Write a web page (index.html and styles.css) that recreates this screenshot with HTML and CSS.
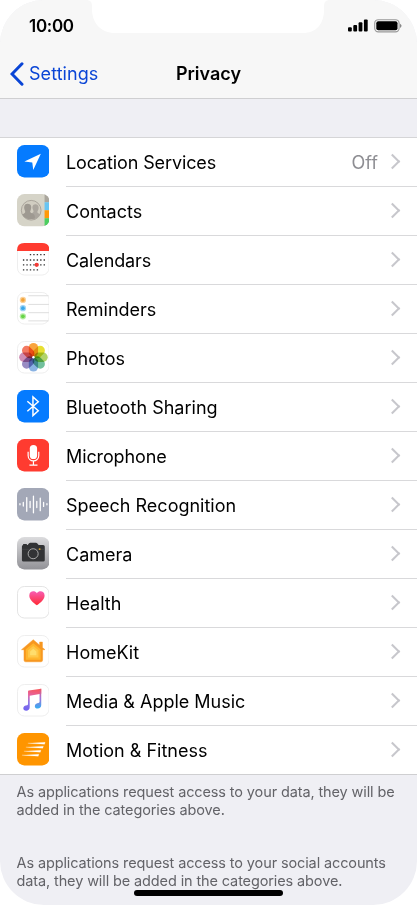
FILE: index.html
```html
<!DOCTYPE html>
<html lang="en">
<head>
    <meta charset="UTF-8">
    <meta name="viewport" content="width=device-width, initial-scale=1.0">
    <title>Privacy</title>
    <link rel="stylesheet" href="styles.css">
</head>
<body>
    <div class="phone">
        <header class="header">
            <svg class="notch" viewBox="0 0 246 34"><path d="M0 0C4 0 6 2 6 6V9C6 23 15 33 29 33H217C231 33 238 23 238 10V6C238 2 240 0 244 0Z" fill="#fff"/></svg>
            <div class="status">
                <span class="time">10:00</span>
                <svg class="signal" width="20" height="14" viewBox="0 0 20 14"><rect x="0" y="8.2" width="3.8" height="4.3" rx="1"/><rect x="5.3" y="6" width="3.8" height="6.5" rx="1"/><rect x="10.6" y="3.3" width="3.8" height="9.2" rx="1"/><rect x="15.9" y=".5" width="3.8" height="12" rx="1"/></svg>
                <svg class="battery" width="28" height="14" viewBox="0 0 28 14"><rect x=".7" y=".7" width="24.4" height="12.2" rx="3.6" fill="none" stroke="#999" stroke-width="1.1"/><rect x="2.3" y="2.3" width="21.2" height="9" rx="2"/><path d="M26 4.7Q27.5 5.5 27.5 6.8T26 9Z" fill="#888"/></svg>
            </div>
            <div class="nav">
                <a class="back" href="#">
                    <svg width="14" height="24" viewBox="0 0 14 24"><path d="M12 1.8 2 12 12 22.2" fill="none" stroke="#0a45d6" stroke-width="3" stroke-linecap="round"/></svg>
                    <span>Settings</span>
                </a>
                <h1 class="title">Privacy</h1>
            </div>
        </header>

        <ul class="list">
            <li class="row">
                <svg class="icon" viewBox="0 0 33 33"><rect width="33" height="33" rx="7.5" fill="#057bff"/><path d="M24.2 8.8 7.5 16.8 15.5 17.8 16.5 25.3Z" fill="#fff"/></svg>
                <div class="cell"><span class="tight">Location Services</span><span class="value">Off</span><i class="arrow"></i></div>
            </li>
            <li class="row">
                <svg class="icon" viewBox="0 0 33 33">
                    <clipPath id="round"><rect width="33" height="33" rx="7.5"/></clipPath>
                    <g clip-path="url(#round)">
                        <rect width="33" height="33" fill="#d6d4c8"/><path d="M28 0h5v8.5h-5z" fill="#aaa69d"/><path d="M28 8.5h5v8h-5z" fill="#68c5f3"/><path d="M28 16.5h5v8h-5z" fill="#ff9808"/><path d="M28 24.5h5V33h-5z" fill="#4cce60"/>
                        <circle cx="14.4" cy="16.5" r="10" fill="#d1cdc1" stroke="#aaa59b" stroke-width="1"/>
                        <path d="M18.5 10.3C22 10 22.8 14 21.2 16.8C20 19 21 19.3 23.6 20.6C21.7 24.6 18 26 15.3 25.6L14 20C17 18.7 17.2 18.3 16.3 16C15 12.8 16 10.6 18.5 10.3Z" fill="#aba69e"/>
                        <path d="M10.8 10C7.2 10 6.6 13.6 8 16.7C9 19 7.6 19.5 5.3 20.7C7.5 25 12.8 27 18.2 24.7C18.3 21 17.5 20.4 14.5 19.2C12.8 18.5 13.3 17.8 14 16C15.2 13 14.2 10 10.8 10Z" fill="#9e9991"/>
                    </g>
                </svg>
                <div class="cell"><span>Contacts</span><i class="arrow"></i></div>
            </li>
            <li class="row">
                <svg class="icon" viewBox="0 0 33 33">
                    <rect x=".5" y=".5" width="32" height="32" rx="7" fill="#fff" stroke="#eee"/><path d="M0 8V7.5Q0 0 7.5 0h18Q33 0 33 7.5V8Z" fill="#ff3b30"/>
                    <path d="M13 11.8H29M6 17.2H29M6 22.2H29M6 27.3H22" stroke="#333" stroke-width="1.4" stroke-dasharray="1.4 2.1"/><circle cx="20" cy="22.2" r="2.2" fill="#f33b36"/>
                </svg>
                <div class="cell"><span class="tight">Calendars</span><i class="arrow"></i></div>
            </li>
            <li class="row">
                <svg class="icon" viewBox="0 0 33 33">
                    <rect x=".5" y=".5" width="32" height="32" rx="7" fill="#fff" stroke="#eee"/><path d="M11.5 3.8H32M11.5 12.6H33M11.5 21H33M11.5 29.3H32" stroke="#ddd"/>
                    <circle cx="6" cy="8" r="3.2" fill="#fbd29b"/><circle cx="6" cy="8" r="1.9" fill="#f1a43a"/>
                    <circle cx="6" cy="16.4" r="3.2" fill="#9fd4f4"/><circle cx="6" cy="16.4" r="1.9" fill="#3aa8eb"/>
                    <circle cx="6" cy="24.7" r="3.2" fill="#b6eba5"/><circle cx="6" cy="24.7" r="1.9" fill="#67d447"/>
                </svg>
                <div class="cell"><span>Reminders</span><i class="arrow"></i></div>
            </li>
            <li class="row">
                <svg class="icon" viewBox="0 0 33 33">
                    <rect x=".5" y=".5" width="32" height="32" rx="7" fill="#fff" stroke="#eee"/>
                    <g class="petals">
                        <rect x="12" y="2" width="9.4" height="14" rx="4.7" fill="#f99a27"/>
                        <rect x="12" y="2" width="9.4" height="14" rx="4.7" fill="#e5dc1c" transform="rotate(45 16.7 16.5)"/>
                        <rect x="12" y="2" width="9.4" height="14" rx="4.7" fill="#a9cf57" transform="rotate(90 16.7 16.5)"/>
                        <rect x="12" y="2" width="9.4" height="14" rx="4.7" fill="#62b991" transform="rotate(135 16.7 16.5)"/>
                        <rect x="12" y="2" width="9.4" height="14" rx="4.7" fill="#7dabe0" transform="rotate(180 16.7 16.5)"/>
                        <rect x="12" y="2" width="9.4" height="14" rx="4.7" fill="#8d7fbd" transform="rotate(225 16.7 16.5)"/>
                        <rect x="12" y="2" width="9.4" height="14" rx="4.7" fill="#ca82ac" transform="rotate(270 16.7 16.5)"/>
                        <rect x="12" y="2" width="9.4" height="14" rx="4.7" fill="#f26b52" transform="rotate(315 16.7 16.5)"/>
                    </g>
                    <circle cx="16.7" cy="16.5" r="1.2" fill="#fff"/>
                </svg>
                <div class="cell"><span>Photos</span><i class="arrow"></i></div>
            </li>
            <li class="row">
                <svg class="icon" viewBox="0 0 33 33"><rect width="33" height="33" rx="7.5" fill="#057bff"/><path d="M10.5 11.4 21.6 21 16.2 26V7L21.6 12 10.5 21.6" fill="none" stroke="#fff" stroke-width="1.5"/></svg>
                <div class="cell"><span>Bluetooth Sharing</span><i class="arrow"></i></div>
            </li>
            <li class="row">
                <svg class="icon" viewBox="0 0 33 33"><rect width="33" height="33" rx="7.5" fill="#ff3b30"/><rect x="13" y="6" width="7.4" height="14.4" rx="3.7" fill="#fff"/><path d="M11.3 13V16.7C11.3 24 22.1 24 22.1 16.7V13M16.7 22.2V26.2M12.6 26.5H20.8" fill="none" stroke="#fff" stroke-width="1.2"/></svg>
                <div class="cell"><span class="tight">Microphone</span><i class="arrow"></i></div>
            </li>
            <li class="row">
                <svg class="icon" viewBox="0 0 33 33"><rect width="33" height="33" rx="7.5" fill="#a3a8b7"/><path d="M3 16V17M6.4 14.7V18.3M9.9 9.7V23.7M13.3 13.5V19.8M16.7 8.3V25.2M20.1 13.5V19.8M23.6 10.3V23M27 14.7V18.7M30.4 16V17" stroke="#fff" stroke-width="1.3" stroke-linecap="round"/></svg>
                <div class="cell"><span>Speech Recognition</span><i class="arrow"></i></div>
            </li>
            <li class="row">
                <svg class="icon" viewBox="0 0 33 33">
                    <linearGradient id="silver" x2="0" y2="1"><stop stop-color="#dcdcde"/><stop offset="1" stop-color="#929297"/></linearGradient>
                    <rect width="33" height="33" rx="7.5" fill="url(#silver)"/>
                    <path d="M5 9.5Q5 8.2 6.2 8V7.2H10V8H10.8L12.3 6.4Q12.8 5.9 13.5 5.9H19.3Q20 5.9 20.4 6.4L22 8H26.5Q28.2 8 28.2 9.6V23.5Q28.2 25 26.7 25H6.5Q5 25 5 23.5Z" fill="#323335"/>
                    <path d="M5 12.5H28.2" stroke="#47484a" stroke-width=".7"/><circle cx="16.4" cy="17" r="5.1" fill="#323335" stroke="#aaa" stroke-width="1"/><circle cx="23" cy="12.3" r="1" fill="#d8a52a"/>
                </svg>
                <div class="cell"><span>Camera</span><i class="arrow"></i></div>
            </li>
            <li class="row">
                <svg class="icon" viewBox="0 0 33 33">
                    <linearGradient id="pink" x2="0" y2="1"><stop stop-color="#f85db3"/><stop offset="1" stop-color="#ff2a32"/></linearGradient>
                    <rect x=".5" y=".5" width="32" height="32" rx="7" fill="#fff" stroke="#e4e4e4"/><path d="M20.2 19.5C16 16.5 12.5 13.5 12.5 9.6C12.5 5 18 4 20.2 7.4C22.4 4 28 5 28 9.6C28 13.5 24.4 16.5 20.2 19.5Z" fill="url(#pink)"/>
                </svg>
                <div class="cell"><span>Health</span><i class="arrow"></i></div>
            </li>
            <li class="row">
                <svg class="icon" viewBox="0 0 33 33">
                    <rect x=".5" y=".5" width="32" height="32" rx="7" fill="#fff" stroke="#eee"/>
                    <path d="M16.5 4.8 23 10.3V7.2H25.8V12.7L28.4 14.9H26V25.5Q26 27.2 24.3 27.2H8.8Q7.1 27.2 7.1 25.5V14.9H4.6Z" fill="#f79720" stroke="#f79720" stroke-width=".5" stroke-linejoin="round"/>
                    <path d="M16.5 8.4 24 14.5V25.2H9V14.5Z" fill="#ffb52d"/><path d="M16.5 11.2 21.8 15.6V22.8H11.2V15.6Z" fill="#ffc84a"/><path d="M16.5 14 19.7 16.8V20.6H13.3V16.8Z" fill="#ffdd6c"/>
                </svg>
                <div class="cell"><span>HomeKit</span><i class="arrow"></i></div>
            </li>
            <li class="row">
                <svg class="icon" viewBox="0 0 33 33">
                    <linearGradient id="note" gradientUnits="userSpaceOnUse" x1="18" y1="5" x2="14" y2="27"><stop stop-color="#f8555c"/><stop offset=".32" stop-color="#e563a0"/><stop offset=".65" stop-color="#8b75e8"/><stop offset="1" stop-color="#7363ef"/></linearGradient>
                    <linearGradient id="stem" x2="0" y2="1"><stop stop-color="#f4555f"/><stop offset=".45" stop-color="#a671d7"/><stop offset="1" stop-color="#32aff4"/></linearGradient>
                    <rect x=".5" y=".5" width="32" height="32" rx="7" fill="#fff" stroke="#eee"/>
                    <path d="M11.2 7.6Q11.2 6.7 12 6.5L24.6 4.7V10L12.9 12V23.7C12.9 26 11.3 27.2 9.3 27.2C7.5 27.2 6.4 26 6.4 24.7C6.4 22.5 8.3 21.8 10.3 21.5Q11.2 21.3 11.2 20.3Z" fill="url(#note)"/>
                    <path d="M22.9 5 24.6 4.7V21.4C24.6 23.6 23.2 25 21 25C19.2 25 18.1 23.8 18.1 22.5C18.1 20.4 19.9 19.6 21.8 19.3Q22.9 19.1 22.9 18Z" fill="url(#stem)"/>
                </svg>
                <div class="cell"><span>Media &amp; Apple Music</span><i class="arrow"></i></div>
            </li>
            <li class="row">
                <svg class="icon" viewBox="0 0 33 33"><rect width="33" height="33" rx="7.5" fill="#ff9500"/><path d="M11 10.4 28.6 9.4 28 11.4ZM9 14.4 26.8 13.4 26.2 15.4ZM7 18.5 24.3 17.5 23.7 19.5ZM5 22.5 22.2 21.5 21.6 23.5Z" fill="#fff" stroke="#fff" stroke-width=".2"/></svg>
                <div class="cell"><span>Motion &amp; Fitness</span><i class="arrow"></i></div>
            </li>
        </ul>

        <footer class="notes">
            <p>As applications request access to your data, they will be<br>added in the categories above.</p>
            <p>As applications request access to your social accounts<br>data, they will be added in the categories above.</p>
        </footer>
        <div class="home-bar"></div>
    </div>
</body>
</html>
```
FILE: styles.css
```css
* {
    box-sizing: border-box;
}

body {
    margin: 0;
    background-color: #fff;
    font-family: Inter, sans-serif;
    color: #000;
}

.phone {
    position: relative;
    width: 417px;
    height: 905px;
    overflow: hidden;
    border-radius: 44px;
    background-color: #efeff4;
}

.header {
    height: 99px;
    background-color: #f7f7f7;
    border-bottom: 1px solid #cfcfd1;
}

.notch {
    position: absolute;
    top: 0;
    left: 86px;
    width: 246px;
    height: 34px;
}

.status {
    display: flex;
    align-items: center;
    height: 51px;
    padding: 0 15px 0 29px;
}

.time {
    flex: 1;
    font-size: 17px;
    font-weight: 600;
    letter-spacing: -0.3px;
}

.battery {
    margin-left: 6px;
}

.nav {
    display: grid;
    grid-template-columns: 1fr auto 1fr;
    align-items: center;
    height: 45px;
    padding: 0 10px;
}

.back {
    display: flex;
    align-items: center;
    gap: 5px;
    color: #0a45d6;
    font-size: 18px;
    letter-spacing: 0.05px;
    text-decoration: none;
}

.title {
    margin: 0;
    font-size: 18px;
    font-weight: 600;
    letter-spacing: 0;
}

.list {
    margin: 38px 0 0;
    padding: 0;
    list-style: none;
    background-color: #fff;
    border-top: 1px solid #d5d5d7;
    border-bottom: 1px solid #cfcfd1;
}

.row {
    display: flex;
    height: 49px;
    padding-left: 16.5px;
}

.row:last-child {
    height: 48px;
}

.icon {
    flex: none;
    width: 32.5px;
    height: 32.5px;
    margin: 7px 17px 0 0;
}

.cell {
    flex: 1;
    display: flex;
    align-items: center;
    padding-right: 16px;
    border-bottom: 1px solid #d9d9db;
    font-size: 18px;
}

.row:last-child .cell {
    border-bottom: none;
}

.tight {
    letter-spacing: -0.12px;
}

.value {
    margin-left: auto;
    margin-right: 9px;
    color: #8e8e93;
}

.arrow {
    width: 11px;
    height: 11px;
    margin-left: auto;
    margin-right: 3px;
    margin-bottom: 1px;
    border-top: 2px solid #c7c7cc;
    border-right: 2px solid #c7c7cc;
    transform: rotate(45deg);
}

.value + .arrow {
    margin-left: 0;
}

.petals rect {
    mix-blend-mode: multiply;
    opacity: 0.9;
}

.notes {
    padding: 8px 16.5px 0;
    font-size: 14.5px;
    line-height: 18px;
    letter-spacing: -0.12px;
    color: #636368;
    white-space: nowrap;
}

.notes p {
    margin: 0 0 35px;
}

.home-bar {
    position: absolute;
    left: 134px;
    bottom: 9px;
    width: 149px;
    height: 6px;
    border-radius: 3px;
    background-color: #000;
}
```
